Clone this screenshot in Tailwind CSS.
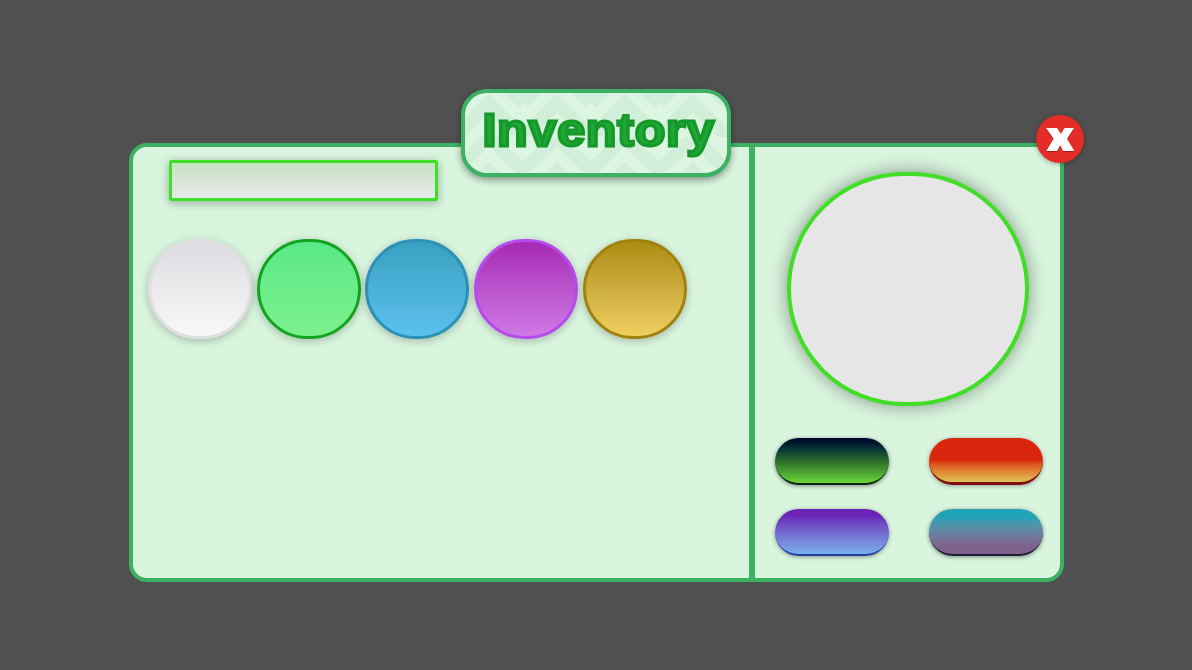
<!DOCTYPE html>
<html lang="en">
<head>
  <meta charset="UTF-8" />
  <title>Inventory</title>
  <script src="https://cdn.jsdelivr.net/npm/@tailwindcss/browser@4"></script>
</head>
<body class="bg-[#505050] overflow-hidden">
<div class="w-[1192px] h-[670px] pt-[143px] pl-[129px]">

  <!-- Panel -->
  <div class="relative flex w-[935px] h-[439px] rounded-[18px] border-[4px] border-[#3cb063] bg-[#d9f5de]">

    <!-- Left side -->
    <div class="w-[622px] h-full pt-[13px] pl-[15px] border-r-[6px] border-[#3cb063]">
      <div class="ml-[21px] w-[269px] h-[41px] rounded-[2px] border-[3px] border-[#41de28] bg-gradient-to-b from-[#c6e2c4] to-[#e8e8ec] shadow-[0_2px_10px_rgba(0,0,0,0.3)]"></div>

      <div class="flex gap-[4.7px] mt-[38px]">
        <div class="w-[104px] h-[100px] rounded-full border-[3px] border-[#dfdfe1] bg-gradient-to-b from-[#dcdde1] to-[#f8f8f8] shadow-[0_2px_8px_rgba(0,0,0,0.25)]"></div>
        <div class="w-[104px] h-[100px] rounded-full border-[3px] border-[#12a41e] bg-gradient-to-b from-[#58e986] to-[#7cf18e] shadow-[0_2px_8px_rgba(0,0,0,0.25)]"></div>
        <div class="w-[104px] h-[100px] rounded-full border-[3px] border-[#2b91b5] bg-gradient-to-b from-[#38a0bf] to-[#5cc0ef] shadow-[0_2px_8px_rgba(0,0,0,0.25)]"></div>
        <div class="w-[104px] h-[100px] rounded-full border-[3px] border-[#b54bed] bg-gradient-to-b from-[#a627b4] to-[#cf78e6] shadow-[0_2px_8px_rgba(0,0,0,0.25)]"></div>
        <div class="w-[104px] h-[100px] rounded-full border-[3px] border-[#9f8210] bg-gradient-to-b from-[#ad8c12] to-[#efd05f] shadow-[0_2px_8px_rgba(0,0,0,0.25)]"></div>
      </div>
    </div>

    <!-- Right side -->
    <div class="flex-1 pt-[25px]">
      <div class="ml-[32px] w-[242px] h-[234px] rounded-full border-[4px] border-[#41de28] bg-[#e6e6e6] shadow-[0_0_18px_rgba(0,0,0,0.4)]"></div>

      <div class="grid grid-cols-[114px_114px] gap-x-[40px] gap-y-[24px] ml-[20px] mt-[32px]">
        <div class="h-[47px] rounded-full border-b-[2px] border-[#0b2208] bg-gradient-to-b from-[#020a2c] from-5% via-[#2a6a2a] via-50% to-[#6ad836] shadow-[0_1px_4px_rgba(0,0,0,0.45)]"></div>
        <div class="h-[47px] rounded-full border-b-[3px] border-[#7f0f0a] bg-gradient-to-b from-[#d9260c] from-50% to-[#d9c455] shadow-[0_1px_4px_rgba(0,0,0,0.35)]"></div>
        <div class="h-[47px] rounded-full border-b-[2px] border-[#2a3c9e] bg-gradient-to-b from-[#6a25b8] from-15% to-[#78b0ec] shadow-[0_1px_4px_rgba(0,0,0,0.4)]"></div>
        <div class="h-[47px] rounded-full border-b-[2px] border-[#1c2034] bg-gradient-to-b from-[#22a2b6] from-20% to-[#80608c] to-85% shadow-[0_1px_4px_rgba(0,0,0,0.45)]"></div>
      </div>
    </div>

    <!-- Title tab -->
    <div class="absolute left-[328px] top-[-58px] w-[270px] h-[88px] overflow-hidden rounded-[26px] border-[4px] border-[#3cb063] bg-[#ddf6e2] shadow-[0_3px_7px_rgba(0,0,0,0.4)] flex items-center justify-center">
      <svg class="absolute inset-0" width="262" height="80">
        <defs>
          <pattern id="chev" width="68" height="68" patternUnits="userSpaceOnUse" x="-10" y="-24">
            <path d="M0 34 L34 0 L68 34 M0 68 L34 34 L68 68" fill="none" stroke="#d1eed8" stroke-width="13"/>
          </pattern>
        </defs>
        <rect width="262" height="80" fill="url(#chev)"/>
      </svg>
      <span class="relative -mt-[6px] ml-[6px] scale-x-[1.09] tracking-[0.7px] font-['Liberation_Sans',Arial,sans-serif] font-bold text-[46px] leading-none text-[#20a836] [-webkit-text-stroke:3px_#15982a] [text-shadow:0_1px_1px_rgba(0,0,0,0.25)]">Inventory</span>
    </div>

    <!-- Close button -->
    <div class="absolute right-[-24px] top-[-32px] w-[48px] h-[48px] rounded-full bg-[#e52d27] shadow-[0_1px_5px_rgba(0,0,0,0.35)] flex items-center justify-center">
      <svg width="29" height="23" viewBox="0 0 29 23" class="drop-shadow-[0_1px_0_rgba(120,0,0,0.5)]">
        <path d="M0 0H11L15 6L18.500 0H28L21 10.700L28.300 23H17L14.300 17.300L11 23H0.300L7.700 10.700Z" fill="#ffffff"/>
      </svg>
    </div>
  </div>
</div>
</body>
</html>
